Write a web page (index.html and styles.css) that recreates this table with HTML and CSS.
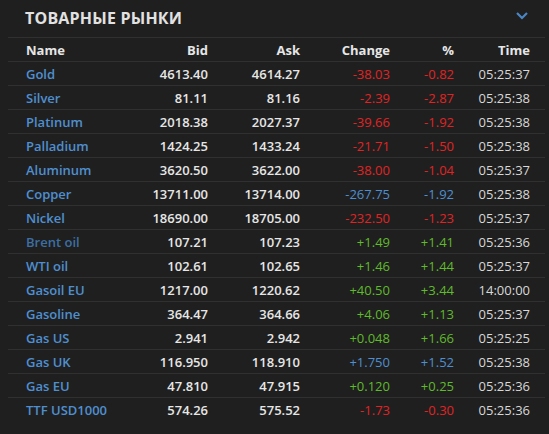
FILE: index.html
```html
<!DOCTYPE html>
<html lang="ru">

<head>
    <meta charset="UTF-8">
    <meta name="viewport" content="width=device-width, initial-scale=1.0">
    <title>Товарные рынки</title>
    <link rel="stylesheet" href="styles.css">
</head>

<body>
    <div class="panel">
        <div class="panel-head">
            <h2>ТОВАРНЫЕ РЫНКИ</h2>
            <svg class="chevron" width="14" height="10" viewBox="0 0 14 10">
                <path d="M2 2 L7 7 L12 2" fill="none" stroke="#4a86c5" stroke-width="2.2" />
            </svg>
        </div>
        <table class="quotes">
            <colgroup>
                <col class="c-name">
                <col class="c-bid">
                <col class="c-ask">
                <col class="c-change">
                <col class="c-pct">
                <col class="c-time">
            </colgroup>
            <thead>
                <tr>
                    <th class="name">Name</th>
                    <th>Bid</th>
                    <th>Ask</th>
                    <th>Change</th>
                    <th>%</th>
                    <th class="time">Time</th>
                </tr>
            </thead>
            <tbody>
                <tr><td class="name">Gold</td><td>4613.40</td><td>4614.27</td><td class="down">-38.03</td><td class="down">-0.82</td><td class="time">05:25:37</td></tr>
                <tr><td class="name">Silver</td><td>81.11</td><td>81.16</td><td class="down">-2.39</td><td class="down">-2.87</td><td class="time">05:25:38</td></tr>
                <tr><td class="name">Platinum</td><td>2018.38</td><td>2027.37</td><td class="down">-39.66</td><td class="down">-1.92</td><td class="time">05:25:38</td></tr>
                <tr><td class="name">Palladium</td><td>1424.25</td><td>1433.24</td><td class="down">-21.71</td><td class="down">-1.50</td><td class="time">05:25:38</td></tr>
                <tr><td class="name">Aluminum</td><td>3620.50</td><td>3622.00</td><td class="down">-38.00</td><td class="down">-1.04</td><td class="time">05:25:37</td></tr>
                <tr><td class="name">Copper</td><td>13711.00</td><td>13714.00</td><td class="flat">-267.75</td><td class="flat">-1.92</td><td class="time">05:25:38</td></tr>
                <tr><td class="name">Nickel</td><td>18690.00</td><td>18705.00</td><td class="down">-232.50</td><td class="down">-1.23</td><td class="time">05:25:37</td></tr>
                <tr><td class="name dim">Brent oil</td><td>107.21</td><td>107.23</td><td class="up">+1.49</td><td class="up">+1.41</td><td class="time">05:25:36</td></tr>
                <tr><td class="name">WTI oil</td><td>102.61</td><td>102.65</td><td class="up">+1.46</td><td class="up">+1.44</td><td class="time">05:25:37</td></tr>
                <tr><td class="name">Gasoil EU</td><td>1217.00</td><td>1220.62</td><td class="up">+40.50</td><td class="up">+3.44</td><td class="time">14:00:00</td></tr>
                <tr><td class="name">Gasoline</td><td>364.47</td><td>364.66</td><td class="up">+4.06</td><td class="up">+1.13</td><td class="time">05:25:37</td></tr>
                <tr><td class="name">Gas US</td><td>2.941</td><td>2.942</td><td class="up">+0.048</td><td class="up">+1.66</td><td class="time">05:25:25</td></tr>
                <tr><td class="name">Gas UK</td><td>116.950</td><td>118.910</td><td class="flat">+1.750</td><td class="flat">+1.52</td><td class="time">05:25:38</td></tr>
                <tr><td class="name">Gas EU</td><td>47.810</td><td>47.915</td><td class="up">+0.120</td><td class="up">+0.25</td><td class="time">05:25:36</td></tr>
                <tr><td class="name">TTF USD1000</td><td>574.26</td><td>575.52</td><td class="down">-1.73</td><td class="down">-0.30</td><td class="time">05:25:36</td></tr>
            </tbody>
        </table>
    </div>
</body>

</html>
```

FILE: styles.css
```css
body {
    margin: 0;
    background: #1f1f1f;
    color: #e6e6e6;
    font-family: "Open Sans", "Noto Sans", Arial, sans-serif;
}

.panel {
    padding: 0 4px 0 8px;
}

.panel-head {
    display: flex;
    justify-content: space-between;
    align-items: center;
    height: 35px;
    padding: 0 16px 2px 17px;
}

.panel-head h2 {
    margin: 0;
    font-size: 16px;
    font-weight: 700;
    color: #e2e2e2;
    letter-spacing: 0.2px;
}

.chevron {
    margin-top: -4px;
}

.quotes {
    width: 537px;
    table-layout: fixed;
    border-collapse: collapse;
    font-size: 13px;
}

.c-name { width: 110px; }
.c-bid { width: 90px; }
.c-ask { width: 92px; }
.c-change { width: 90px; }
.c-pct { width: 64px; }
.c-time { width: 91px; }

.quotes th,
.quotes td {
    height: 23px;
    padding: 0;
    text-align: right;
    border-top: 1px solid #303030;
    white-space: nowrap;
}

.quotes th {
    font-weight: 700;
    color: #e6e6e6;
}

.quotes td {
    font-weight: 600;
}

.quotes .name {
    text-align: left;
    padding-left: 18px;
}

.quotes td.name {
    color: #4f8fd0;
}

.quotes td.dim {
    color: #3d6fa3;
}

.quotes .time {
    padding-right: 15px;
}

.quotes td.time {
    font-weight: 400;
    color: #d8d8d8;
}

.quotes td.down {
    color: #e02424;
    font-weight: 400;
}

.quotes td.up {
    color: #5fba2c;
    font-weight: 400;
}

.quotes td.flat {
    color: #4f8fd0;
    font-weight: 400;
}
```
